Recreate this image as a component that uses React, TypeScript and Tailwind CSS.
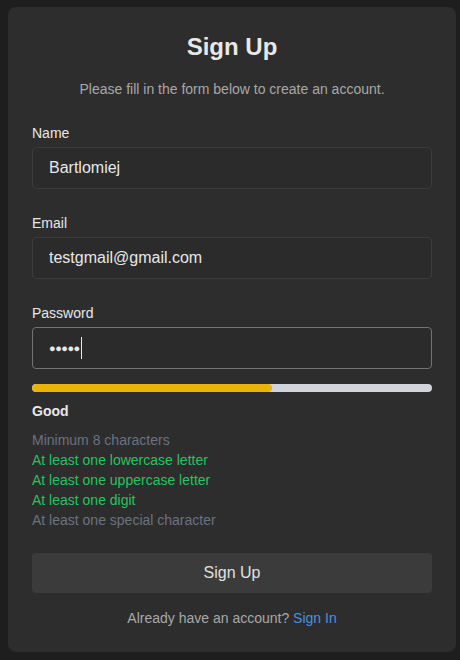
import React from 'react';

const rules = [
  { text: 'Minimum 8 characters', ok: false },
  { text: 'At least one lowercase letter', ok: true },
  { text: 'At least one uppercase letter', ok: true },
  { text: 'At least one digit', ok: true },
  { text: 'At least one special character', ok: false },
];

function Field({ label, value }: { label: string; value: string }) {
  return (
    <div className="flex flex-col gap-1">
      <label className="text-sm leading-5 text-[#e8e8e8]">{label}</label>
      <input
        readOnly
        value={value}
        className="h-[42px] rounded border border-[#3c3c3c] bg-[#2b2b2b] px-4 text-base text-[#e8e8e8] outline-none"
      />
    </div>
  );
}

export default function App() {
  return (
    <div className="min-h-screen bg-[#1e1e1e] pt-[7px] pb-2 font-['Liberation_Sans',Arial,sans-serif]">
      <div className="ml-2 w-[448px] rounded-lg bg-[#2d2d2d] px-6 pt-6 pb-6">
        <h1 className="text-center text-2xl leading-8 font-bold text-[#e8e8e8]">Sign Up</h1>
        <p className="mt-4 text-center text-sm leading-5 text-[#a8a8a8]">
          Please fill in the form below to create an account.
        </p>

        <div className="mt-6 flex flex-col gap-6">
          <Field label="Name" value="Bartlomiej" />
          <Field label="Email" value="testgmail@gmail.com" />

          <div className="flex flex-col gap-1">
            <label className="text-sm leading-5 text-[#e8e8e8]">Password</label>
            <div className="flex h-[42px] items-center rounded border border-[#747474] bg-[#2b2b2b] px-4 text-[#e8e8e8]">
              <span className="text-[11px] tracking-[-0.5px]">●●●●●</span>
              <span className="ml-px h-[22px] w-px bg-[#e8e8e8]" />
            </div>
          </div>
        </div>

        <div className="mt-[15px] h-2 w-full overflow-hidden rounded-full bg-[#d1d5db]">
          <div className="h-full rounded-full bg-[#eab308]" style={{ width: '60%' }} />
        </div>
        <p className="mt-[9px] text-sm leading-5 font-bold text-[#e8e8e8]">Good</p>

        <ul className="mt-[9px] flex flex-col">
          {rules.map((r) => (
            <li
              key={r.text}
              className={`text-sm leading-5 ${r.ok ? 'text-[#22c55e]' : 'text-[#6b7280]'}`}
            >
              {r.text}
            </li>
          ))}
        </ul>

        <button className="mt-[23px] h-10 w-full rounded bg-[#3b3b3b] text-base text-[#e0e0e0]">
          Sign Up
        </button>

        <p className="mt-[15px] text-center text-sm leading-5 text-[#a8a8a8]">
          Already have an account? <span className="text-[#4a90e2]">Sign In</span>
        </p>
      </div>
    </div>
  );
}
